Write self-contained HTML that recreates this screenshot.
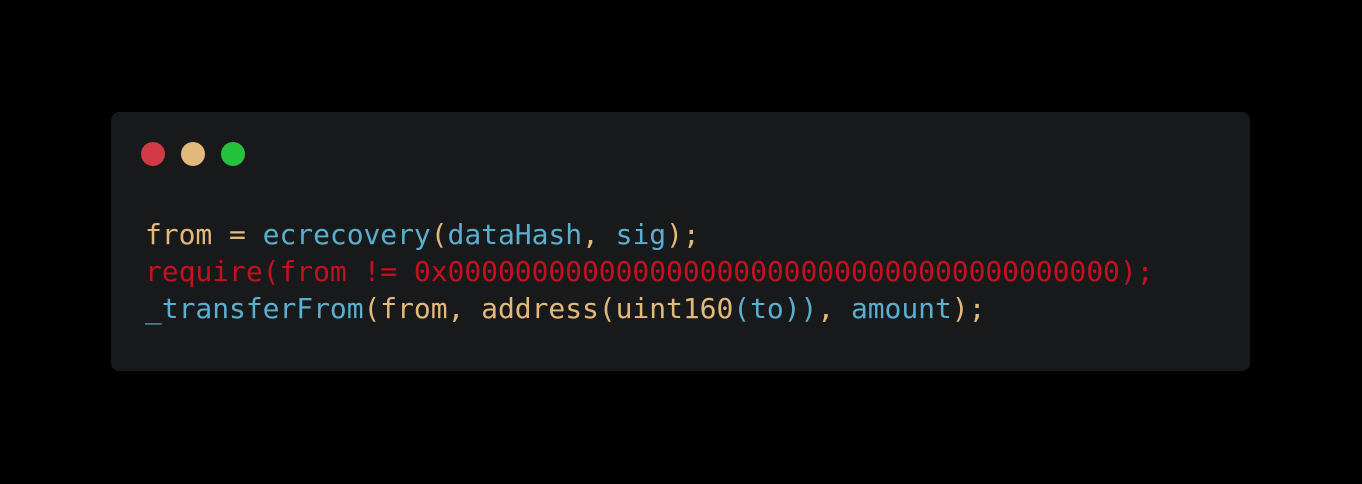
<!DOCTYPE html>
<html><head><style>
html,body{margin:0;padding:0;background:#000;width:1362px;height:484px;overflow:hidden}
.card{position:absolute;left:111px;top:112px;width:1139px;height:259px;background:#18191b;border-radius:8px}
.dot{position:absolute;top:30px;width:24px;height:24px;border-radius:50%}
pre{position:absolute;left:34px;top:104px;margin:0;font-family:"DejaVu Sans Mono","Liberation Mono",monospace;font-size:28px;letter-spacing:-0.05px;line-height:37px;color:#e3b97b}
.b{color:#5aafcf}.o{color:#e3b97b}.r{color:#c5101f}
</style></head><body>
<div class="card">
<div class="dot" style="left:30px;background:#d23a45"></div>
<div class="dot" style="left:70px;background:#e3b97b"></div>
<div class="dot" style="left:110px;background:#27c23d"></div>
<pre><span class="o">from = </span><span class="b">ecrecovery</span><span class="o">(</span><span class="b">dataHash</span><span class="o">, </span><span class="b">sig</span><span class="o">);</span>
<span class="r">require(from != 0x0000000000000000000000000000000000000000);</span>
<span class="b">_transferFrom</span><span class="o">(from, address(uint160</span><span class="b">(to))</span><span class="o">, </span><span class="b">amount</span><span class="o">);</span></pre>
</div>
</body></html>
